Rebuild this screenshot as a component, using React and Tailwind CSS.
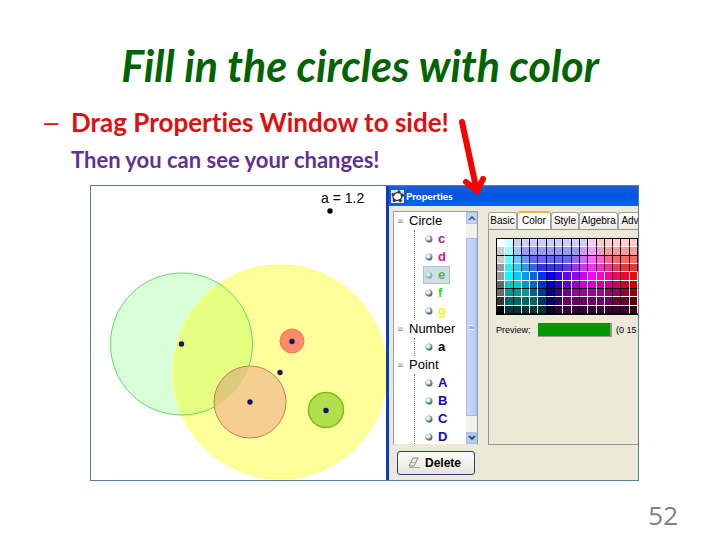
// App.jsx
// Slide 52 — fill in the circles: the drawing on the left, and the
// Properties window dragged off to its right.

import clsx from 'clsx';

const TREE = [
  {
    name: 'Circle',
    items: [
      { name: 'c', color: 'text-[#9a1fa0]' },
      { name: 'd', color: 'text-[#d4148c]' },
      { name: 'e', color: 'text-[#5fae5f]', selected: true },
      { name: 'f', color: 'text-[#1fdc1f]' },
      { name: 'g', color: 'text-[#f8f81c]' },
    ],
  },
  { name: 'Number', items: [{ name: 'a', color: 'text-black' }] },
  {
    name: 'Point',
    items: [
      { name: 'A', color: 'text-[#0a0ac0]' },
      { name: 'B', color: 'text-[#0a0ac0]' },
      { name: 'C', color: 'text-[#0a0ac0]' },
      { name: 'D', color: 'text-[#0a0ac0]' },
    ],
  },
];

const TABS = [
  { name: 'Basic', width: 'w-[29px]' },
  { name: 'Color', width: 'w-[34px]', active: true },
  { name: 'Style', width: 'w-[28px]' },
  { name: 'Algebra', width: 'w-[39px]' },
  { name: 'Adv', width: 'w-[24px]' },
];

// One entry per row; line is the grid line under the row
const SWATCHES = [
  { line: '#fff', colors: 'fff cff ccf ccf ccf ccf ccf ccf ccf ccf ccf fcf fcc fcc fcc fcc fcc' },
  { line: '#000', colors: 'ccc 9ff 9cf 99f 99f 99f 99f 99f 99f 99f c9f f9f f9c f99 f99 f99 f99' },
  { line: '#fff', colors: 'ccc 6ff 6cf 69f 66f 66f 66f 66f 66f 96f c6f f6f f6c f69 f66 f66 f66' },
  { line: '#fff', colors: '999 3ee 3ce 39e 36e 33e 33e 33e 63e 93e c3e e3e e3c e39 e36 e33 e33' },
  { line: '#fff', colors: '999 0ff 0cf 09f 06e 03f 00e 30f 60f 90f c0f f0f f0c f09 f06 f03 f00' },
  { line: '#000', colors: '666 0cc 0cc 09c 06c 03c 00c 30c 60c 90c c0c c0c c09 c09 c06 c03 c00' },
  { line: '#fff', colors: '666 099 099 099 069 039 009 309 609 909 909 909 909 906 906 903 900' },
  { line: '#fff', colors: '333 066 066 066 066 036 006 306 606 606 606 606 606 606 603 603 600' },
  { line: '#000', colors: '000 033 033 033 033 033 003 303 303 303 303 303 303 303 303 303 300' },
];

// Columns whose right-hand line stays dark further down the palette
const DARK_COLUMNS = [1, 5, 6, 9, 13, 14];

function lineRight(row, col) {
  if (col === 0) return '#fff';
  if (row < 2) return '#000';
  return DARK_COLUMNS.includes(col) ? '#000' : row < 4 ? '#222' : '#fff';
}

function Drawing() {
  return (
    <svg viewBox="91 186 295 294" className="block w-[295px] h-[294px] shrink-0 bg-white" role="img" aria-label="Circles">
      <circle cx="181.5" cy="344" r="71" fill="#d9ffd9" />
      <circle cx="280" cy="372" r="107" fill="#ffff99" />
      <clipPath id="overlap">
        <circle cx="181.5" cy="344" r="71" />
      </clipPath>
      <circle cx="280" cy="372" r="107" fill="#e6ff80" clipPath="url(#overlap)" />
      <circle cx="280" cy="372" r="107" fill="none" stroke="#ffff66" />
      <circle cx="181.5" cy="344" r="71" fill="none" stroke="#5fdc5f" />
      <circle cx="250" cy="402" r="36" fill="#f5ce90" />
      <circle cx="250" cy="402" r="36" fill="#dccb7c" clipPath="url(#overlap)" />
      <circle cx="250" cy="402" r="36" fill="none" stroke="#cc7a52" />
      <circle cx="292" cy="341" r="12" fill="#ff8a6a" stroke="#f0785a" />
      <circle cx="326" cy="410" r="17.5" fill="#b0e04c" stroke="#86b820" strokeWidth="1.5" />
      {[[181.5, 344], [292, 341.5], [280, 372.5], [250, 402], [326, 410.5]].map(([x, y]) => (
        <circle key={x} cx={x} cy={y} r="2.7" fill="#14146e" />
      ))}
      <circle cx="330" cy="211" r="2.7" fill="#000" />
      <text x="321" y="203" fontFamily="Liberation Sans, sans-serif" fontSize="14">a = 1.2</text>
    </svg>
  );
}

function TitleBar() {
  return (
    <div className="flex items-center gap-[2px] h-5 pl-[2px] bg-linear-to-b from-[#1a5fd8] via-[#0054e3] to-[#0062fa]">
      <svg viewBox="0 0 13 13" className="w-[13px] h-[13px]" aria-hidden>
        <rect width="13" height="13" fill="#dfe6f2" />
        <ellipse cx="6.5" cy="6.5" rx="4.6" ry="3.8" fill="#fff" stroke="#333" strokeWidth="1.3" transform="rotate(-20 6.5 6.5)" />
        {[[2.2, 4.5], [8, 1.9], [11.3, 5.2], [9.3, 10.6], [3.4, 10.4]].map(([x, y]) => (
          <circle key={x} cx={x} cy={y} r="1.6" fill="#2a3350" />
        ))}
      </svg>
      <span className="font-['Lato',sans-serif] font-black text-[10px] leading-5 text-white">Properties</span>
    </div>
  );
}

function Bullet({ faded }) {
  return (
    <svg viewBox="0 0 8 8" className={clsx('w-2 h-2', faded && 'opacity-50')} aria-hidden>
      <circle cx="4" cy="4" r="3.6" fill="#7fa0a4" />
      <circle cx="4.6" cy="4.9" r="2.6" fill="#5c8286" />
      <circle cx="3.3" cy="3.2" r="2.3" fill="#e6f2f2" />
    </svg>
  );
}

function Tree() {
  return (
    <div className="flex h-[234px] overflow-hidden border border-[#8ea3ac] border-b-[#ece9d8] bg-white">
      <ul className="flex-1 text-[13px] leading-[18px] text-black">
        {TREE.map((group) => (
          <li key={group.name}>
            <div className="flex items-center gap-[6px] pl-1">
              <span className="w-[5px] h-1 bg-[#d6d4c8] border-b border-[#a9a797]" />
              {group.name}
            </div>
            <ul className="ml-5 border-l border-dotted border-[#777]">
              {group.items.map((item) => (
                <li key={item.name} className="flex h-[18px] pl-2">
                  <span
                    className={clsx(
                      'flex items-center gap-[5px] px-[1px] pr-1 font-bold border leading-4',
                      item.color,
                      item.selected ? 'bg-[#cfdfe6] border-[#a9c3d4]' : 'border-transparent',
                    )}
                  >
                    <Bullet faded={item.selected} />
                    {item.name}
                  </span>
                </li>
              ))}
            </ul>
          </li>
        ))}
      </ul>

      {/* scroll bar */}
      <div className="flex flex-col w-[11px] bg-[#f3f1ec]">
        <button type="button" aria-label="Scroll up" className="flex items-center justify-center h-3 bg-[#c5d5fb] border border-[#aebfe8]">
          <svg viewBox="0 0 8 6" className="w-2 h-[6px]" aria-hidden>
            <path d="M1 5 L4 2 L7 5" fill="none" stroke="#3d5a8a" strokeWidth="1.6" />
          </svg>
        </button>
        <div className="flex flex-1 items-center justify-center mt-[14px] bg-linear-to-r from-[#cddafc] to-[#b5c8f6] border border-[#a5b8ea]">
          <span className="w-[5px] h-[5px] border-y border-[#eef3ff] bg-[#9db3e6]" />
        </div>
        <button type="button" aria-label="Scroll down" className="flex items-center justify-center mt-4 h-3 bg-[#b7caf5] border border-[#aebfe8]">
          <svg viewBox="0 0 8 6" className="w-2 h-[6px]" aria-hidden>
            <path d="M1 1 L4 4 L7 1" fill="none" stroke="#2f4a80" strokeWidth="1.8" />
          </svg>
        </button>
      </div>
    </div>
  );
}

function Palette() {
  return (
    <div className="flex flex-col w-[143px] h-[77px] border border-black bg-black">
      {SWATCHES.map((row, r) => (
        <div key={r} className="flex flex-1">
          {row.colors.split(' ').map((hex, c) => (
            <button
              key={c}
              type="button"
              aria-label={`#${hex}`}
              className="flex-1 border-r border-b"
              style={{ backgroundColor: `#${hex}`, borderRightColor: lineRight(r, c), borderBottomColor: row.line }}
            />
          ))}
        </div>
      ))}
    </div>
  );
}

function ColorPane() {
  return (
    <div className="flex flex-col flex-1 min-w-0 h-[234px] overflow-hidden text-black">
      <div role="tablist" className="flex items-end h-[18px] shrink-0">
        {TABS.map((tab) => (
          <button
            key={tab.name}
            type="button"
            role="tab"
            aria-selected={Boolean(tab.active)}
            className={clsx(
              'shrink-0 border border-b-0 border-[#9aa5aa] rounded-t-[3px] text-center text-[10px]',
              tab.width,
              tab.active
                ? 'h-[18px] leading-[14px] bg-[#fbfbf8] border-t-2 border-t-[#e8b84a]'
                : 'h-[17px] leading-4 bg-linear-to-b from-white to-[#ecebe2]',
            )}
          >
            {tab.name}
          </button>
        ))}
      </div>
      <div className="flex-1 pl-[7px] pt-2 border-l border-t border-b border-[#8d9599]">
        <Palette />
        <div className="flex items-center mt-2 text-[9px] leading-[14px] whitespace-nowrap">
          <span className="w-[42px] shrink-0">Preview:</span>
          <span className="w-[74px] h-[14px] shrink-0 bg-[#009900] border-r-2 border-b border-[#9b988a]" />
          <span className="ml-1">(0 15</span>
        </div>
      </div>
    </div>
  );
}

function PropertiesWindow() {
  return (
    <div className="relative flex-1 min-w-0">
      <div className="h-[294px] overflow-hidden bg-[#ece9d8] border-l-3 border-[#0a3cc4] font-['Liberation_Sans',sans-serif]">
        <TitleBar />
        <div className="flex gap-[10px] pl-1 pt-[5px]">
          <div className="w-[85px] shrink-0">
            <Tree />
            <button
              type="button"
              className="flex items-center gap-1 w-[78px] h-6 mt-[6px] ml-1 pl-[10px] rounded-[3px] border border-[#23466e] bg-linear-to-b from-white to-[#e6e4da] text-[12px] font-bold text-black"
            >
              <svg viewBox="0 0 13 12" className="w-[13px] h-3 shrink-0" aria-hidden>
                <path d="M5 1 L10 1 L6 9 L1 9 Z" fill="#f2edd4" stroke="#8d8a74" />
                <path d="M3 5.5 L8 5.5" stroke="#b3ae94" />
                <path d="M1 10.5 H12" stroke="#a8a590" />
              </svg>
              Delete
            </button>
          </div>
          <ColorPane />
        </div>
      </div>

      {/* arrow pointing at the title bar */}
      <svg viewBox="0 0 36 84" className="absolute left-[70px] -top-[69px] w-9 h-[84px] pointer-events-none" aria-hidden>
        <path d="M6 5 L20 70" fill="none" stroke="#f80000" strokeWidth="6" strokeLinecap="round" />
        <path d="M10 65 L21 74 L27 62" fill="none" stroke="#f80000" strokeWidth="6" strokeLinecap="round" strokeLinejoin="miter" />
      </svg>
    </div>
  );
}

export default function App() {
  return (
    <main className="min-h-screen bg-white font-['Lato',sans-serif] [font-variant-ligatures:none]">
      <h1 className="pt-10 text-center text-[43px] leading-[52px] font-bold italic text-[#006400]">
        Fill in the circles with color
      </h1>
      <ul className="pl-11 pt-[14px]">
        <li className="flex gap-[11px] text-[26px] leading-8 font-bold text-[#dd1111]">
          <span className="w-4 font-['Liberation_Sans',sans-serif] font-normal">–</span>
          Drag Properties Window to side!
        </li>
      </ul>
      <p className="pl-[71px] pt-2 text-[22px] leading-7 font-bold text-[#5f3290]">
        Then you can see your changes!
      </p>

      <section className="flex mt-[11px] ml-[90px] mr-[81px] border border-[#5b7f9c]">
        <Drawing />
        <PropertiesWindow />
      </section>

      <footer className="pt-[18px] pr-[42px] text-right font-['Open_Sans',sans-serif] text-[26px] leading-8 text-[#808080]">
        52
      </footer>
    </main>
  );
}
